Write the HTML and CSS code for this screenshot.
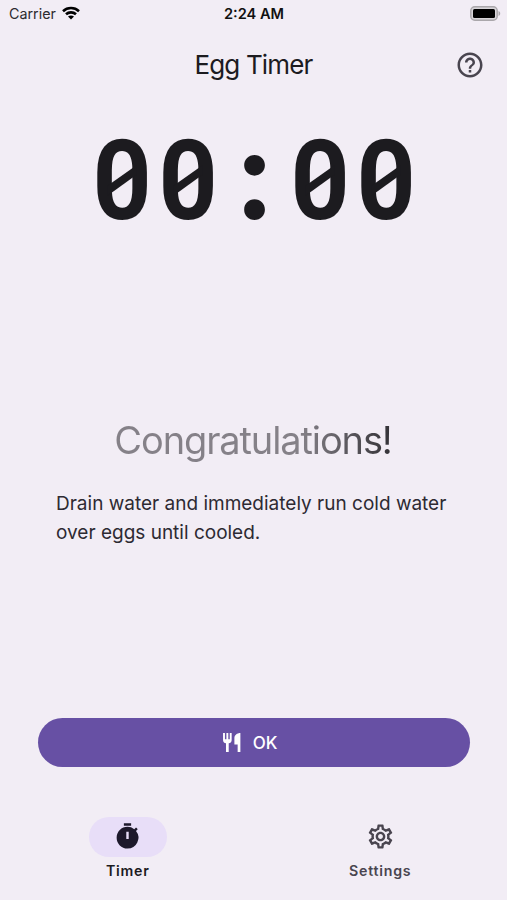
FILE: index.html
```html
<!DOCTYPE html>
<html lang="en">
<head>
<meta charset="utf-8">
<title>Egg Timer</title>
<link rel="stylesheet" href="styles.css">
</head>
<body>
<div class="screen">
  <div class="status">
    <div class="status-left">
      <span class="carrier">Carrier</span>
      <svg class="wifi" viewBox="0 0 18 14" width="18" height="14">
        <g fill="none" stroke="#000" stroke-width="2.6">
          <path d="M1 5.2C5.5 1 12.500 1 17 5.200"/>
          <path d="M4 8.300C6.800 5.700 11.200 5.700 14 8.300"/>
        </g>
        <path d="M6 10.600C7.700 9.100 10.300 9.100 12 10.600L9 13.600Z"/>
      </svg>
    </div>
    <span class="clock">2:24 AM</span>
    <svg class="battery" viewBox="0 0 31 15" width="31" height="15">
      <rect x=".8" y=".8" width="26.400" height="13.400" rx="4" fill="#d8d5d9" stroke="#aaa7ab" stroke-width="1.500"/>
      <rect x="3" y="3" width="22" height="9" rx="1.500"/>
      <path d="M28.500 5C30.800 6 30.800 9 28.500 10Z" fill="#aaa7ab"/>
    </svg>
  </div>
  <header class="bar">
    <h1 class="title">Egg Timer</h1>
    <svg class="help" viewBox="0 0 24 24" width="30" height="30"><path d="M11 18h2v-2h-2v2zm1-16C6.480 2 2 6.480 2 12s4.480 10 10 10 10-4.480 10-10S17.520 2 12 2zm0 18c-4.410 0-8-3.590-8-8s3.590-8 8-8 8 3.590 8 8-3.590 8-8 8zm0-14c-2.210 0-4 1.790-4 4h2c0-1.100.9-2 2-2s2 .9 2 2c0 2-3 1.750-3 5h2c0-2.250 3-2.500 3-5 0-2.210-1.790-4-4-4z"/></svg>
  </header>
  <div class="time">
    <span class="digit">0</span><span class="digit">0</span><span class="colon">:</span><span class="digit">0</span><span class="digit">0</span>
  </div>
  <main class="message">
    <h2 class="congrats">Congratulations!</h2>
    <p class="hint">Drain water and immediately run cold water<br>over eggs until cooled.</p>
  </main>
  <button class="ok">
    <svg viewBox="0 0 20 20" width="21" height="21" fill="#fff"><path d="M1 1h1.800v6h1.400V1H6v6h1.400V1h1.800v6.500a3.200 3.200 0 0 1-2.800 3.200V19H3.800v-8.300A3.200 3.200 0 0 1 1 7.500zM17.500 1v18h-2.600v-7H11.800V6c0-3 2.500-5 5.700-5z"/></svg>
    <span class="ok-label">OK</span>
  </button>
  <nav class="nav">
    <div class="tab active">
      <span class="pill"><svg viewBox="0 0 24 24" width="29" height="29"><path d="M9 1h6v2H9zM19.030 7.390l1.420-1.420c-.43-.51-.9-.99-1.410-1.410l-1.420 1.420A8.962 8.962 0 0 0 12 4c-4.970 0-9 4.030-9 9s4.020 9 9 9a8.994 8.994 0 0 0 7.030-14.610zM13 14h-2V8h2v6z"/></svg></span>
      <span class="tab-label">Timer</span>
    </div>
    <div class="tab">
      <span class="pill"><svg viewBox="0 0 24 24" width="29" height="29"><path d="M19.430 12.980c.04-.32.07-.64.07-.98 0-.34-.03-.66-.07-.98l2.110-1.650c.19-.15.24-.42.12-.64l-2-3.460a.5.500 0 0 0-.61-.22l-2.490 1c-.52-.4-1.080-.73-1.690-.98l-.38-2.650A.488.488 0 0 0 14 2h-4c-.25 0-.46.18-.49.42l-.38 2.650c-.61.25-1.170.59-1.690.98l-2.490-1a.5.500 0 0 0-.61.22l-2 3.460c-.13.22-.07.49.12.64l2.110 1.650c-.04.32-.07.65-.07.98 0 .33.03.66.07.98l-2.110 1.650c-.19.15-.24.42-.12.64l2 3.460a.5.500 0 0 0 .61.22l2.490-1c.52.4 1.080.73 1.690.98l.38 2.650c.03.24.24.42.49.42h4c.25 0 .46-.18.49-.42l.38-2.650c.61-.25 1.170-.59 1.690-.98l2.490 1c.23.09.49 0 .61-.22l2-3.460c.12-.22.07-.49-.12-.64l-2.110-1.650zm-1.980-1.710c.04.31.05.52.05.73 0 .21-.02.43-.05.73l-.14 1.130.89.7 1.080.84-.7 1.210-1.270-.51-1.040-.42-.9.680c-.43.32-.84.56-1.250.73l-1.060.43-.16 1.130-.2 1.350h-1.400l-.19-1.350-.16-1.130-1.060-.43c-.43-.18-.83-.41-1.230-.71l-.91-.7-1.060.43-1.270.51-.7-1.210 1.080-.84.89-.7-.14-1.130c-.03-.31-.05-.54-.05-.74s.02-.43.05-.73l.14-1.130-.89-.7-1.080-.84.7-1.210 1.270.51 1.040.42.9-.68c.43-.32.84-.56 1.250-.73l1.060-.43.16-1.130.2-1.350h1.390l.19 1.350.16 1.130 1.060.43c.43.18.83.41 1.230.71l.91.7 1.060-.43 1.270-.51.7 1.210-1.070.85-.89.7.14 1.130zM12 8c-2.210 0-4 1.790-4 4s1.790 4 4 4 4-1.790 4-4-1.790-4-4-4zm0 6c-1.100 0-2-.9-2-2s.9-2 2-2 2 .9 2 2-.9 2-2 2z"/></svg></span>
      <span class="tab-label">Settings</span>
    </div>
  </nav>
</div>
</body>
</html>
```
FILE: styles.css
```css
* { box-sizing: border-box; }
body {
  margin: 0;
  background: #f2edf5;
  color: #1c1b1f;
  font-family: Inter, "Liberation Sans", sans-serif;
}
.screen {
  width: 507px;
  height: 900px;
  overflow: hidden;
  display: flex;
  flex-direction: column;
}
.status {
  height: 28px;
  flex: none;
  display: grid;
  grid-template-columns: 1fr auto 1fr;
  align-items: center;
  padding: 0 6px 0 9px;
  line-height: 28px;
}
.status-left { display: flex; align-items: center; gap: 6px; }
.carrier { font-size: 14.300px; color: #2c2a2e; }
.wifi { margin-top: -2px; }
.clock { font-size: 14.600px; font-weight: 600; color: #111; margin-right: 2px; }
.battery { justify-self: end; margin-top: -2px; }
.bar {
  height: 74px;
  flex: none;
  display: grid;
  grid-template-columns: 1fr auto 1fr;
  align-items: center;
  padding: 0 22px;
}
.title {
  grid-column: 2;
  margin: -2px 0 0;
  font-size: 26px;
  font-weight: 400;
  letter-spacing: -.85px;
}
.help { justify-self: end; margin-top: -1px; fill: #49454f; }
.time {
  height: 156px;
  flex: none;
  display: flex;
  justify-content: center;
  padding: 2px 0 0 1px;
  font: 700 111px/155px Roboto, sans-serif;
}
.digit, .colon { width: 66px; text-align: center; }
.digit { position: relative; transform: scaleX(.93); }
.digit::after {
  content: "";
  position: absolute;
  left: 17px;
  top: 61px;
  width: 32px;
  height: 31px;
  background: #1c1b1f;
  clip-path: polygon(0 68%, 100% 0, 100% 31%, 0 100%);
}
.colon { font-family: Inter, sans-serif; font-size: 123px; line-height: 142px; padding-left: 1px; }
.message {
  height: 460px;
  flex: none;
  padding: 159px 56px 0;
}
.congrats {
  margin: 0 0 0 -1px;
  text-align: center;
  font-size: 38px;
  line-height: 47px;
  font-weight: 400;
  letter-spacing: -1.120px;
  color: transparent;
  background: linear-gradient(90deg, #858188 0 62%, #1c1b1f 92%);
  background-clip: text;
  -webkit-background-clip: text;
}
.hint {
  margin: 25px 0 0;
  font-size: 19px;
  line-height: 29px;
  color: #2d2a32;
  white-space: nowrap;
}
.ok {
  height: 49px;
  flex: none;
  margin: 0 37px 0 38px;
  padding: 0 9px 0 0;
  border: 0;
  border-radius: 25px;
  background: #6750a4;
  color: #fff;
  display: flex;
  align-items: center;
  justify-content: center;
  gap: 10px;
  font: 500 17px Inter, sans-serif;
}
.nav {
  height: 133px;
  display: grid;
  grid-template-columns: 1fr 1fr;
  padding-top: 50px;
}
.tab {
  display: flex;
  flex-direction: column;
  align-items: center;
  color: #49454f;
  fill: #49454f;
}
.pill {
  width: 78px;
  height: 40px;
  border-radius: 20px;
  display: flex;
  align-items: center;
  justify-content: center;
}
.pill svg { margin-top: -1px; }
.active { color: #1c1b1f; fill: #1d192b; padding-left: 2px; }
.active .pill { background: #e8def8; }
.tab-label {
  margin-top: 4px;
  font-size: 14.200px;
  line-height: 20px;
  font-weight: 600;
  letter-spacing: .75px;
}
```
